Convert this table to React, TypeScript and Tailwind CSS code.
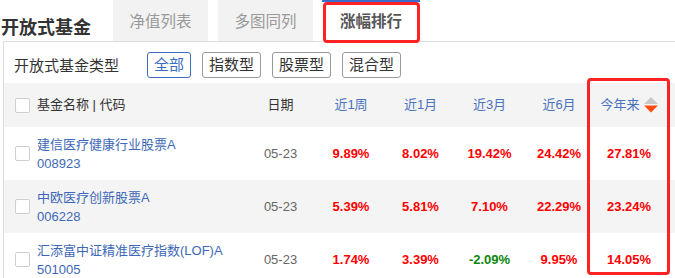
import React from 'react'

const funds = [
  { name: '建信医疗健康行业股票A', code: '008923', date: '05-23', vals: ['9.89%', '8.02%', '19.42%', '24.42%', '27.81%'] },
  { name: '中欧医疗创新股票A', code: '006228', date: '05-23', vals: ['5.39%', '5.81%', '7.10%', '22.29%', '23.24%'] },
  { name: '汇添富中证精准医疗指数(LOF)A', code: '501005', date: '05-23', vals: ['1.74%', '3.39%', '-2.09%', '9.95%', '14.05%'] },
]

const periods = ['近1周', '近1月', '近3月', '近6月']
const types = ['全部', '指数型', '股票型', '混合型']

function Checkbox() {
  return <span className="block w-[15px] h-[15px] rounded-[2px] border border-[#cfcfcf] bg-white" />
}

function SortIcon() {
  return (
    <svg width="14" height="16" viewBox="0 0 14 16" className="ml-[4px]">
      <polygon points="7,0 14,7 0,7" fill="#c9c9c9" />
      <polygon points="0,8.5 14,8.5 7,15.5" fill="#ff4a10" />
    </svg>
  )
}

const cols = 'grid grid-cols-[33px_208px_71px_70px_69px_69px_70px_70px] items-center'

export default function App() {
  return (
    <div className="relative w-[675px] h-[278px] overflow-hidden bg-white font-['Liberation_Sans','Noto_Sans_CJK_SC',sans-serif] text-[#333]">
      <div className="pl-[3px]">
        {/* tabs */}
        <div className="flex h-[42px] border-b border-[#ddd]">
          <div className="-ml-[2px] w-[112px] pt-[15px] text-[18px] leading-[26px] font-bold text-[#333] whitespace-nowrap">
            开放式基金
          </div>
          <div className="flex gap-[10px]">
            <div className="w-[95px] h-[41px] bg-[#f2f2f2] flex items-center justify-center pt-[2px] text-[15.5px] text-[#999]">净值列表</div>
            <div className="w-[95px] h-[41px] bg-[#f2f2f2] flex items-center justify-center pt-[2px] text-[15.5px] text-[#999]">多图同列</div>
            <div className="w-[98px] h-[42px] -ml-[1px] bg-white border-t-2 border-[#3a6cd0] flex items-center justify-center text-[15.5px] font-bold text-[#555]">涨幅排行</div>
          </div>
        </div>

        <div className="border-l border-[#ddd]">
          {/* filter */}
          <div className="flex items-center h-[41px] pt-[5px] pl-[10px]">
            <div className="w-[133px] pt-[2px] text-[15px] text-[#333]">开放式基金类型</div>
            <div className="flex gap-[11px]">
              {types.map((t, i) => (
                <span
                  key={t}
                  className={
                    i === 0
                      ? 'h-[26px] px-[6px] flex items-center rounded-[3px] border border-[#3a6cc0] text-[15px] text-[#3a6cc0]'
                      : 'h-[26px] px-[6px] flex items-center rounded-[3px] border border-[#999] text-[15px] text-[#333]'
                  }
                >
                  {t}
                </span>
              ))}
            </div>
          </div>

          {/* table */}
          <div className="text-[13px]">
            <div className={`${cols} h-[44px] bg-[#f4f4f4]`}>
              <div className="pl-[11px]"><Checkbox /></div>
              <div className="text-[#333]">基金名称 | 代码</div>
              <div className="text-center text-[#333]">日期</div>
              {periods.map(p => (
                <div key={p} className="text-center text-[#4a72bd]">{p}</div>
              ))}
              <div className="flex items-center justify-center text-[#4a72bd]">
                今年来
                <SortIcon />
              </div>
            </div>
            {funds.map((f, i) => (
              <div key={f.code} className={`${cols} h-[53px] ${i % 2 === 1 ? 'bg-[#f4f4f4]' : 'bg-white'}`}>
                <div className="pl-[11px]"><Checkbox /></div>
                <div className="leading-[19px] text-[#3e68b7] whitespace-nowrap">
                  <div>{f.name}</div>
                  <div>{f.code}</div>
                </div>
                <div className="text-center text-[#666]">{f.date}</div>
                {f.vals.map((v, j) => (
                  <div key={j} className={`text-center font-bold ${v.startsWith('-') ? 'text-[#0a870a]' : 'text-[#ff0000]'}`}>
                    {v}
                  </div>
                ))}
              </div>
            ))}
          </div>
        </div>
      </div>

      {/* annotation boxes */}
      <div className="absolute left-[323px] top-[2px] w-[97px] h-[41px] border-[3px] border-[#ff2222] rounded-[4px] pointer-events-none" />
      <div className="absolute left-[587px] top-[78px] w-[83px] h-[197px] border-[3px] border-[#ff2222] rounded-[4px] pointer-events-none" />
    </div>
  )
}
